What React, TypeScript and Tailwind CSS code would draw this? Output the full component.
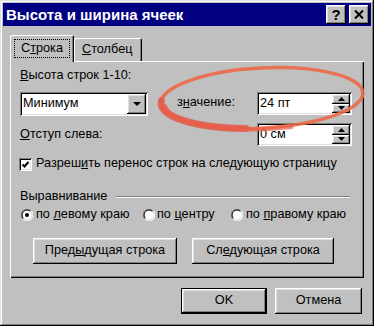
import React from 'react';

const raised = "shadow-[inset_-1px_-1px_#000,inset_1px_1px_#fff,inset_-2px_-2px_#808080,inset_2px_2px_#dfdfdf]";
const sunken = "shadow-[inset_1px_1px_#808080,inset_-1px_-1px_#fff,inset_2px_2px_#000,inset_-2px_-2px_#dfdfdf]";

const Radio = ({ checked }: { checked?: boolean }) => (
  <svg width="12" height="12" viewBox="0 0 12 12" className="shrink-0">
    <circle cx="6" cy="6" r="5" fill="#fff" />
    <path d="M 10.2 1.8 A 5.9 5.9 0 0 0 1.8 10.2" stroke="#808080" strokeWidth="1" fill="none" />
    <path d="M 1.8 10.2 A 5.9 5.9 0 0 0 10.2 1.8" stroke="#fff" strokeWidth="1" fill="none" />
    <path d="M 9.5 2.5 A 4.9 4.9 0 0 0 2.5 9.5" stroke="#000" strokeWidth="1" fill="none" />
    <path d="M 2.5 9.5 A 4.9 4.9 0 0 0 9.5 2.5" stroke="#dfdfdf" strokeWidth="1" fill="none" />
    {checked && <circle cx="6" cy="6" r="2" fill="#000" />}
  </svg>
);

const Spinner = () => (
  <div className="flex flex-col w-[18px] h-full ml-auto">
    <div className={`flex-1 flex items-center justify-center bg-[#c0c0c0] ${raised}`}>
      <svg width="7" height="4" viewBox="0 0 7 4"><polygon points="3.5,0 7,4 0,4" fill="#000" /></svg>
    </div>
    <div className={`flex-1 flex items-center justify-center bg-[#c0c0c0] ${raised}`}>
      <svg width="7" height="4" viewBox="0 0 7 4"><polygon points="0,0 7,0 3.5,4" fill="#000" /></svg>
    </div>
  </div>
);

const SpinBox = ({ value }: { value: string }) => (
  <div className={`w-[95px] h-[23px] bg-white p-[2px] flex items-stretch ${sunken}`}>
    <span className="pl-[1px] flex items-center">{value}</span>
    <Spinner />
  </div>
);

export default function App() {
  return (
    <div className="relative w-[374px] h-[326px] bg-[#c0c0c0] p-[3px] text-[12.7px] text-black font-['Liberation_Sans',Arial,sans-serif] shadow-[inset_-1px_-1px_#000,inset_1px_1px_#dfdfdf,inset_-2px_-2px_#808080,inset_2px_2px_#fff] overflow-hidden">
      {/* title bar */}
      <div className="h-[23px] bg-[#000080] flex items-center pl-[3px] pr-[2px]">
        <span className="text-white font-bold text-[15px] leading-none">Высота и ширина ячеек</span>
        <div className="ml-auto flex gap-[3px]">
          <div className={`w-[20px] h-[19px] bg-[#c0c0c0] flex items-center justify-center font-bold text-[15px] leading-none ${raised}`}>?</div>
          <div className={`w-[20px] h-[19px] bg-[#c0c0c0] flex items-center justify-center ${raised}`}>
            <svg width="10" height="9" viewBox="0 0 10 9">
              <path d="M1 0.5 L9 8.5 M9 0.5 L1 8.5" stroke="#000" strokeWidth="2" />
            </svg>
          </div>
        </div>
      </div>

      <div className="px-[7px]">
        {/* tabs */}
        <div className="mt-[9px] h-[26px] flex items-end">
          <div className="relative z-10 -mb-[1px] w-[64px] h-[27px] bg-[#c0c0c0] rounded-t-[2px] p-[4px] shadow-[inset_1px_1px_#fff,inset_-1px_0_#000,inset_-2px_0_#808080]">
            <div className="h-full border border-dotted border-black flex items-center justify-center">
              С<u>т</u>рока
            </div>
          </div>
          <div className="w-[68px] h-[23px] bg-[#c0c0c0] rounded-t-[2px] flex items-center pl-[8px] shadow-[inset_1px_1px_#fff,inset_-1px_0_#000,inset_-2px_0_#808080]">
            <u>С</u>толбец
          </div>
        </div>

        {/* panel */}
        <div className="h-[217px] pl-[10px] pt-[7px] flex flex-col shadow-[inset_1px_1px_#fff,inset_-1px_-1px_#000,inset_-2px_-2px_#808080]">
          <div className="h-[16px] flex items-center">
            <span><u>В</u>ысота строк 1-10:</span>
          </div>

          <div className="mt-[8px] h-[24px] flex items-start">
            <div className={`w-[128px] h-[24px] bg-white p-[2px] flex items-stretch ${sunken}`}>
              <span className="pl-[1px] flex items-center">Минимум</span>
              <div className={`ml-auto w-[19px] bg-[#c0c0c0] flex items-center justify-center ${raised}`}>
                <svg width="8" height="4" viewBox="0 0 8 4"><polygon points="0,0 8,0 4,4" fill="#000" /></svg>
              </div>
            </div>
            <span className="ml-[29px] w-[80px] h-[22px] flex items-center">з<u>н</u>ачение:</span>
            <SpinBox value="24 пт" />
          </div>

          <div className="mt-[7px] h-[23px] flex items-center">
            <span className="w-[237px]"><u>О</u>тступ слева:</span>
            <SpinBox value="0 см" />
          </div>

          <div className="mt-[10px] h-[16px] flex items-center -ml-[1px]">
            <div className={`w-[13px] h-[13px] bg-white flex items-center justify-center ${sunken}`}>
              <svg width="9" height="9" viewBox="0 0 9 9"><path d="M1.5 4.5 L3.5 6.5 L7.5 2" stroke="#000" strokeWidth="2" fill="none" /></svg>
            </div>
            <span className="ml-[4px]">Разреш<u>и</u>ть перенос строк на следующую страницу</span>
          </div>

          <div className="mt-[17px] h-[16px] flex items-center">
            <span>Выравнивание</span>
            <div className="flex-1 ml-[9px] mr-[14px] border-t border-t-[#808080] border-b border-b-white" />
          </div>

          <div className="mt-[2px] h-[16px] flex items-center">
            <div className="ml-[1px] w-[122px] flex items-center gap-[3px]">
              <Radio checked />
              <span>по <u>л</u>евому краю</span>
            </div>
            <div className="w-[88px] flex items-center gap-[2px]">
              <Radio />
              <span>по <u>ц</u>ентру</span>
            </div>
            <div className="flex items-center gap-[3px]">
              <Radio />
              <span>по <u>п</u>равому краю</span>
            </div>
          </div>

          <div className="mt-[15px] flex">
            <div className={`ml-[13px] w-[144px] h-[26px] flex items-center justify-center ${raised}`}>
              <span>Пред<u>ы</u>дущая строка</span>
            </div>
            <div className={`ml-[15px] w-[142px] h-[26px] flex items-center justify-center ${raised}`}>
              <span>Сл<u>е</u>дующая строка</span>
            </div>
          </div>
        </div>

        {/* bottom buttons */}
        <div className="mt-[10px] flex justify-end gap-[8px] pr-[2px]">
          <div className="w-[86px] h-[26px] border border-black flex items-center justify-center shadow-[inset_-1px_-1px_#000,inset_1px_1px_#fff,inset_-2px_-2px_#808080,inset_2px_2px_#dfdfdf]">
            OK
          </div>
          <div className={`w-[87px] h-[26px] flex items-center justify-center ${raised}`}>
            Отмена
          </div>
        </div>
      </div>

      {/* hand-drawn red ellipse */}
      <svg className="absolute inset-0 pointer-events-none" width="374" height="326" viewBox="0 0 374 326">
        <g transform="rotate(-3 262 98)" fill="none" strokeLinecap="round">
          <ellipse cx="262" cy="98" rx="101" ry="30" stroke="#ec6a48" strokeWidth="3.5" opacity="0.9" />
          <path d="M 161.4 95.4 A 101 30 0 0 0 244.5 127.5" stroke="#e4584a" strokeWidth="7" opacity="0.85" />
          <path d="M 165 101 A 101 30 0 0 0 290 128.5" stroke="#e8604a" strokeWidth="4" opacity="0.7" />
        </g>
      </svg>
    </div>
  );
}
